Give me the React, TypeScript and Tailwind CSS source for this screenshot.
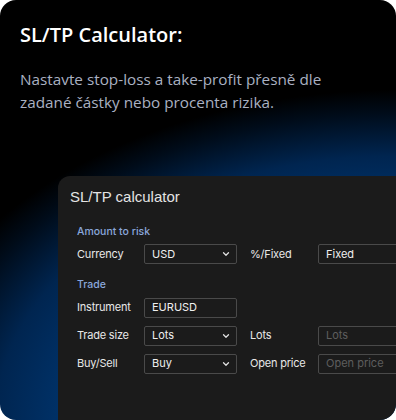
import { ChevronDown } from "lucide-react";

function Select({ value }: { value: string }) {
  return (
    <div className="flex h-[20px] w-[93px] shrink-0 items-center justify-between rounded-[2px] border border-[#4a4a4a] pl-[7px] pr-[5px] text-[11px] text-[#f0f0f0]">
      <span>{value}</span>
      <ChevronDown size={10} strokeWidth={3} className="text-[#e0e0e0]" />
    </div>
  );
}

function Field({ value, placeholder, wide }: { value?: string; placeholder?: string; wide?: boolean }) {
  return (
    <div
      className={
        "flex h-[20px] shrink-0 items-center rounded-[2px] border border-[#4a4a4a] pl-[7px] text-[11px] " +
        (wide ? "w-[93px] " : "w-[100px] ") +
        (value ? "text-[#f0f0f0]" : "text-[#5e5e5e]")
      }
    >
      {value ?? placeholder}
    </div>
  );
}

function Row({ label, left, label2, right }: { label: string; left: React.ReactNode; label2?: string; right?: React.ReactNode }) {
  return (
    <div className="flex items-center">
      <span className="w-[67px] shrink-0 text-[11px] tracking-[-0.2px] text-[#e8e8e8]">{label}</span>
      {left}
      {label2 && <span className="ml-[13px] w-[68px] shrink-0 text-[11px] tracking-[-0.2px] text-[#e8e8e8]">{label2}</span>}
      {right}
    </div>
  );
}

export default function App() {
  return (
    <div className="h-[420px] w-[396px] overflow-hidden" style={{ fontFamily: "Inter, sans-serif" }}>
      <div className="flex h-full w-full flex-col overflow-hidden rounded-2xl bg-[radial-gradient(ellipse_500px_330px_at_100%_100%,#003d7a_0%,#00336b_65%,#002550_80%,#000c1a_93%,#000_100%)] pl-5">
        <h1
          className="mt-[22px] text-[20px] font-semibold leading-[26px] text-white"
          style={{ fontFamily: "'Open Sans', sans-serif" }}
        >
          SL/TP Calculator:
        </h1>
        <p
          className="mt-[20px] text-[15.3px] leading-[23px] text-[#aab1c2]"
          style={{ fontFamily: "'Open Sans', sans-serif" }}
        >
          Nastavte stop-loss a take-profit přesně dle
          <br />
          zadané částky nebo procenta rizika.
        </p>
        <div className="ml-[38px] mt-[62px] flex-1 overflow-hidden rounded-tl-xl bg-[#1b1b1b] pl-3 pt-[10px]">
          <div
            className="text-[15px] leading-[22px] text-[#e4e4e4]"
            style={{ fontFamily: "'Liberation Sans', sans-serif" }}
          >
            SL/TP calculator
          </div>
          <div className="pl-[7px]">
            <div className="mt-[16px] text-[10.5px] font-medium text-[#8aa7dc]">Amount to risk</div>
            <div className="mt-[4px]">
              <Row label="Currency" left={<Select value="USD" />} label2="%/Fixed" right={<Field value="Fixed" />} />
            </div>
            <div className="mt-[13px] text-[10.5px] font-medium text-[#8aa7dc]">Trade</div>
            <div className="mt-[5px] flex flex-col gap-[8px]">
              <Row label="Instrument" left={<Field value="EURUSD" wide />} />
              <Row label="Trade size" left={<Select value="Lots" />} label2="Lots" right={<Field placeholder="Lots" />} />
              <Row label="Buy/Sell" left={<Select value="Buy" />} label2="Open price" right={<Field placeholder="Open price" />} />
            </div>
          </div>
        </div>
      </div>
    </div>
  );
}
